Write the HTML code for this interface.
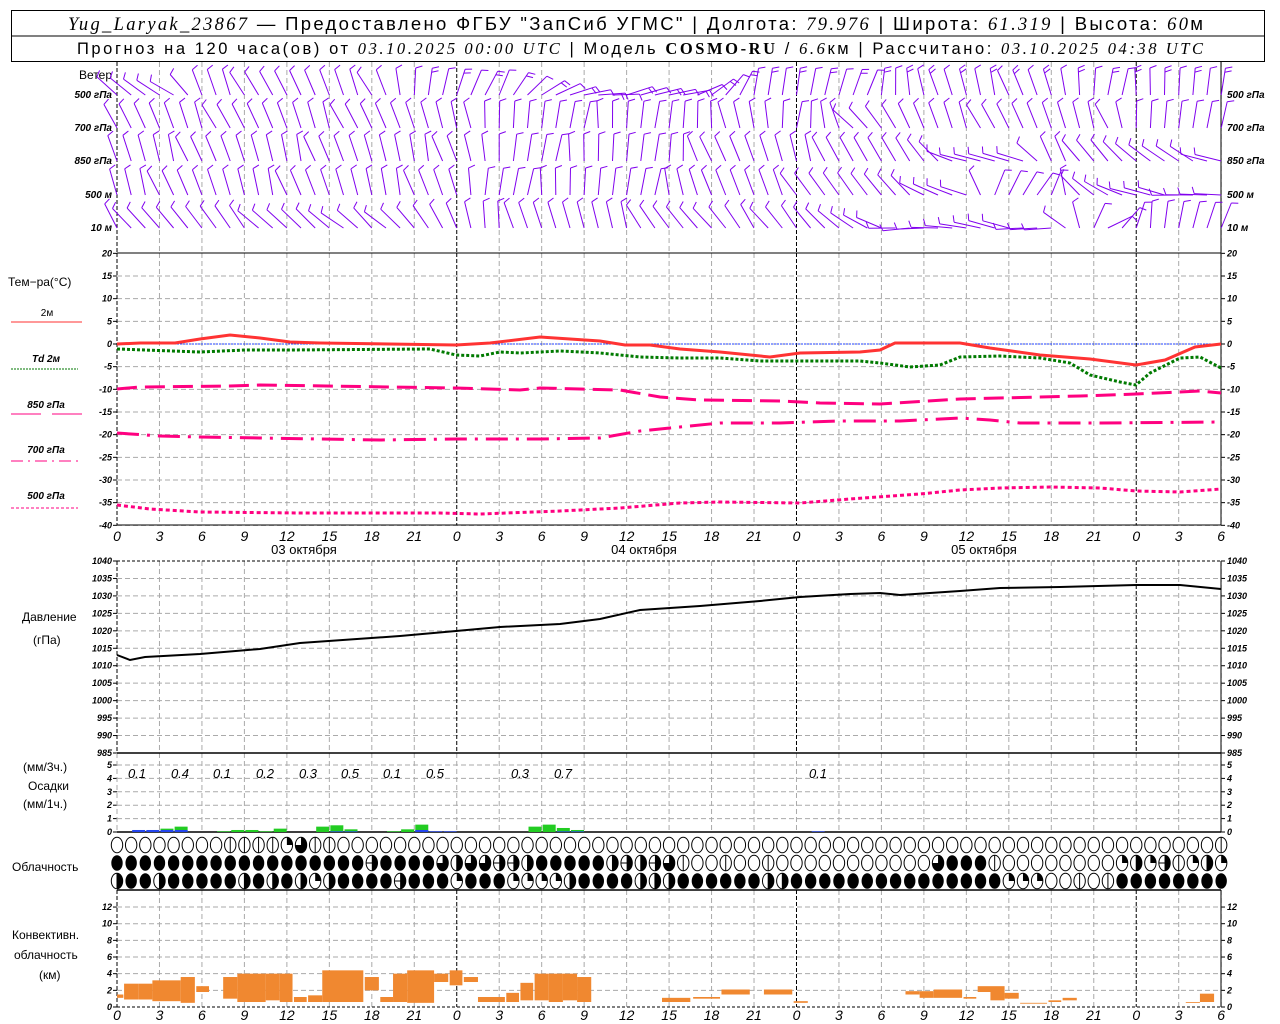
<!DOCTYPE html>
<html><head><meta charset="utf-8"><style>
html,body{margin:0;padding:0;background:#fff;width:1280px;height:1024px;overflow:hidden}
svg{display:block}
text{font-family:"Liberation Sans",sans-serif;fill:#000}
.ax{font-size:9px;font-style:italic;font-weight:bold}
.lb{font-size:12px}
</style></head><body>
<svg id="s" width="1280" height="1024" viewBox="0 0 1280 1024" xmlns="http://www.w3.org/2000/svg">
<rect x="11.5" y="10.5" width="1253" height="51" fill="none" stroke="#000"/>
<line x1="11" y1="36" x2="1265" y2="36" stroke="#000"/>
<text x="68" y="30" textLength="1135" lengthAdjust="spacing" style="font-size:18.5px"><tspan style="font-family:'Liberation Serif',serif;font-style:italic">Yug_Laryak_23867</tspan> — Предоставлено ФГБУ "ЗапСиб УГМС" | Долгота: <tspan style="font-family:'Liberation Serif',serif;font-style:italic">79.976</tspan> | Широта: <tspan style="font-family:'Liberation Serif',serif;font-style:italic">61.319</tspan> | Высота: <tspan style="font-family:'Liberation Serif',serif;font-style:italic">60</tspan>м</text>
<text x="77" y="54" textLength="1126" lengthAdjust="spacing" style="font-size:16.5px">Прогноз на 120 часа(ов) от <tspan style="font-family:'Liberation Serif',serif;font-style:italic">03.10.2025 00:00 UTC</tspan>  | Модель <tspan style="font-family:'Liberation Serif',serif;font-weight:bold">COSMO-RU</tspan> / <tspan style="font-family:'Liberation Serif',serif;font-style:italic">6.6</tspan>км | Рассчитано: <tspan style="font-family:'Liberation Serif',serif;font-style:italic">03.10.2025 04:38 UTC</tspan></text>
<g id="g"></g>
</svg>
<script>
var g=document.getElementById('g'),out='';
function X(h){return 117+h*14.156;}
function L(x1,y1,x2,y2,st){out+='<line x1="'+x1+'" y1="'+y1+'" x2="'+x2+'" y2="'+y2+'" style="'+st+'"/>';}
function T(x,y,t,cls,anc,extra){out+='<text x="'+x+'" y="'+y+'" class="'+(cls||'')+'" text-anchor="'+(anc||'start')+'" '+(extra||'')+'>'+t+'</text>';}
var GR='stroke:#aaa;stroke-width:1;stroke-dasharray:5,3',DY='stroke:#000;stroke-width:1;stroke-dasharray:4,2';
function vgrid(y1,y2,day){for(var h=0;h<=78;h+=3){var isd=(h%24==0);L(X(h),y1,X(h),y2,(isd&&day)?DY:GR);}L(1221,y1,1221,y2,'stroke:#000');}
vgrid(62,253,true);
for(var t=20;t>=-40;t-=5){var y=344-t*4.533;if(t<20)L(117,y,1221,y,GR);T(112,y+3,t,'ax','end');T(1227,y+3,t,'ax');L(1221,y,1225,y,'stroke:#000');L(113,y,117,y,'stroke:#000');}
vgrid(253,525,true);
L(117,253,1221,253,'stroke:#000');L(117,525,1221,525,'stroke:#000');
L(117,344,1221,344,'stroke:#2040ff;stroke-width:1;stroke-dasharray:2,1');
for(var p=1040;p>=985;p-=5){var y=561+(1040-p)*3.4909;if(p<1040&&p>985)L(117,y,1221,y,GR);if(p>985){T(112,y+3,p,'ax','end');T(1227,y+3,p,'ax');}L(1221,y,1225,y,'stroke:#000');L(113,y,117,y,'stroke:#000');}
vgrid(561,753,true);
L(117,561,1221,561,'stroke:#000;stroke-dasharray:3,2');
for(var v=0;v<=5;v++){var y=832-v*13.4;if(v>0)L(117,y,1221,y,GR);T(112,y+3,v,'ax','end');T(1227,y+3,v,'ax');L(1221,y,1225,y,'stroke:#000');L(113,y,117,y,'stroke:#000');}
T(112,756,'985','ax','end');T(1227,756,'985','ax');
vgrid(753,832,false);
L(117,753,1221,753,'stroke:#000;stroke-width:1.5');L(117,832,1221,832,'stroke:#000;stroke-width:1.5');
for(var k=0;k<=12;k+=2){var y=1007-k*8.33;if(k>0)L(117,y,1221,y,GR);T(112,y+3,k,'ax','end');T(1227,y+3,k,'ax');L(1221,y,1225,y,'stroke:#000');L(113,y,117,y,'stroke:#000');}
vgrid(890,1007,true);
L(117,890,1221,890,'stroke:#000;stroke-width:1.5');L(117,1007,1221,1007,'stroke:#000;stroke-dasharray:3,2');
for(var h=0;h<=78;h+=3){var lab=h%24;T(X(h),541,lab,'ax','middle','style="font-size:14px;font-weight:normal"');T(X(h),1020,lab,'ax','middle','style="font-size:14px;font-weight:normal"');}
T(304,554,'03 октября','lb','middle','style="font-size:13px"');T(644,554,'04 октября','lb','middle','style="font-size:13px"');T(984,554,'05 октября','lb','middle','style="font-size:13px"');
T(112,79,'Ветер','lb','end');
var wl=[['500 гПа',95],['700 гПа',128],['850 гПа',161],['500 м',195],['10   м',228]];
wl.forEach(function(a){T(112,a[1]+3,a[0],'ax','end','style="font-size:10px"');T(1227,a[1]+3,a[0],'ax','start','style="font-size:10px"');});
T(8,286,'Тем−ра(°C)','lb');
T(47,316,'2м','ax','middle','style="font-size:10px;font-weight:normal;font-style:normal"');L(11,322,82,322,'stroke:#ff3030;stroke-width:1');
T(46,362,'Td   2м','ax','middle','style="font-size:10px"');L(11,369,78,369,'stroke:#007700;stroke-dasharray:2,1');
T(46,408,'850 гПа','ax','middle','style="font-size:10px"');L(11,414,41,414,'stroke:#ff0080');L(52,414,82,414,'stroke:#ff0080');
T(46,453,'700 гПа','ax','middle','style="font-size:10px"');L(11,461,78,461,'stroke:#ff0080;stroke-dasharray:12,5,2,5');
T(46,499,'500 гПа','ax','middle','style="font-size:10px"');L(11,508,78,508,'stroke:#ff0080;stroke-dasharray:3,2');
T(22,621,'Давление','lb');T(33,644,'(гПа)','lb');
T(23,771,'(мм/3ч.)','lb');T(28,790,'Осадки','lb');T(23,808,'(мм/1ч.)','lb');
T(12,871,'Облачность','lb');
T(12,939,'Конвективн.','lb');T(14,959,'облачность','lb');T(39,979,'(км)','lb');
function curve(pts,st){var d='';pts.forEach(function(p,i){d+=(i?'L':'M')+p[0]+','+p[1];});out+='<path d="'+d+'" fill="none" style="'+st+'"/>';}
curve([[117,344],[140,343],[175,343],[200,339],[230,335],[260,338],[290,342],[320,343],[456,345],[490,343],[540,337],[570,339],[600,341],[625,345],[650,345],[680,349],[720,352],[770,357],[800,353],[860,352],[880,350],[895,343],[960,343],[990,348],[1040,355],[1090,359],[1136,365],[1165,360],[1195,347],[1221,344]],'stroke:#ff3333;stroke-width:3');
curve([[117,349],[200,352],[245,350],[290,350],[430,349],[456,355],[480,356],[500,352],[520,353],[560,351],[600,353],[640,357],[680,358],[720,358],[760,361],[860,361],[880,363],[910,367],[940,365],[960,357],[1000,356],[1040,358],[1070,363],[1090,375],[1120,382],[1136,385],[1150,373],[1180,358],[1200,357],[1221,368]],'stroke:#007a00;stroke-width:3;stroke-dasharray:3,2');
curve([[117,389],[140,387],[230,386],[260,385],[456,388],[520,390],[540,388],[620,390],[660,397],[700,400],[780,401],[820,403],[880,404],[960,399],[1040,397],[1080,396],[1136,394],[1200,391],[1221,393]],'stroke:#ff0080;stroke-width:3;stroke-dasharray:20,8');
curve([[117,433],[160,436],[200,437],[260,438],[380,440],[456,439],[540,439],[600,438],[640,431],[680,427],[720,423],[780,423],[840,421],[900,421],[960,418],[990,420],[1020,423],[1100,423],[1221,422]],'stroke:#ff0080;stroke-width:3;stroke-dasharray:22,8,3,8');
curve([[117,505],[150,509],[200,512],[300,513],[440,513],[480,514],[560,511],[620,508],[680,503],[720,502],[800,503],[850,499],[920,494],[960,490],[1000,488],[1050,487],[1100,488],[1136,491],[1180,492],[1221,489]],'stroke:#ff0080;stroke-width:3;stroke-dasharray:4,3');
curve([[117,655],[130,660],[145,657],[200,654],[260,649],[300,643],[400,636],[456,631],[500,627],[560,624],[600,619],[640,610],[700,606],[760,601],[800,597],[850,594],[880,593],[900,595],[960,591],[1000,588],[1060,587],[1136,585],[1180,585],[1221,589]],'stroke:#000;stroke-width:2');
var pr=[[1,0,.15],[2,0,.15],[3,.25,.15],[4,.4,.15],[7,.05,0],[8,.15,0],[9,.15,0],[10,.05,0],[11,.25,0],[14,.4,0],[15,.5,.05],[16,.2,.05],[19,.05,0],[20,.2,0],[21,.55,.15],[22,0,.05],[23,0,.05],[29,.4,0],[30,.55,0],[31,.3,.05],[32,.15,.05],[49,0,.05]];
pr.forEach(function(b){var x=X(b[0])+1,w=13;if(b[1]>0)out+='<rect x="'+x+'" y="'+(832-b[1]*13.4)+'" width="'+w+'" height="'+(b[1]*13.4)+'" fill="#22cc22"/>';if(b[2]>0)out+='<rect x="'+x+'" y="'+(832-b[2]*13.4)+'" width="'+w+'" height="'+(b[2]*13.4)+'" fill="#2244ee"/>';});
var pn=[[137,'0.1'],[180,'0.4'],[222,'0.1'],[265,'0.2'],[308,'0.3'],[350,'0.5'],[392,'0.1'],[435,'0.5'],[520,'0.3'],[563,'0.7'],[818,'0.1']];
pn.forEach(function(a){T(a[0],778,a[1],'','middle','style="font-size:13px;font-style:italic"');});
var cv=[[0,.45,1.1,1.5],[.5,1.5,.9,2.8],[1.5,2.5,.9,2.8],[2.5,4.5,.7,3.2],[4.5,5.5,.5,3.6],[5.6,6.5,1.8,2.5],[7.5,8.5,1,3.6],[8.5,10.5,.6,4],[10.5,11.5,.8,4],[11.5,12.4,.6,4],[12.5,13.4,.6,1.2],[13.5,14.5,.6,1.4],[14.5,17.4,.6,4.4],[17.5,18.5,2,3.6],[18.6,19.5,.6,1.2],[19.5,20.5,.6,4],[20.5,22.4,.5,4.4],[22.4,23.4,3,4],[23.5,24.4,2.6,4.4],[24.5,25.5,3,3.6],[25.5,27.4,.6,1.2],[27.5,28.4,.6,1.7],[28.5,29.4,.8,2.9],[29.5,30.5,.8,4],[30.5,31.5,.6,4],[31.5,32.5,.8,4],[32.5,33.5,.6,3.6],[38.5,40.5,.6,1.1],[40.7,42.6,1,1.2],[42.7,44.7,1.5,2.1],[45.7,47.7,1.5,2.1],[47.8,48.8,.5,.7],[55.7,56.7,1.5,1.9],[56.7,57.7,1.1,1.9],[57.7,59.7,1.1,2.1],[59.8,60.7,1,1.2],[60.8,62.7,1.8,2.5],[61.7,62.7,.8,1.8],[62.7,63.7,1,1.7],[63.8,65.7,.4,.5],[65.8,66.7,.6,.8],[66.8,67.8,.8,1.1],[75.5,76.5,.5,.6],[76.5,77.5,.6,1.6]];
cv.forEach(function(c){var x1=X(c[0]),x2=X(c[1]),y1=1007-c[3]*8.33,y2=1007-c[2]*8.33;out+='<rect x="'+x1+'" y="'+y1+'" width="'+(x2-x1)+'" height="'+(y2-y1)+'" fill="#f08830"/>';});
var rows=["oooooooovvvvqQvv"+"o".repeat(62)+"v",
"fffffffffffffffffftffffQhQQtthfffffht"+"htQvoovoov"+"ooooooooooo"+"Qfffv"+"oooooooo"+"qhqtvqhq",
"hffhfffffhfhfhqhfffftfffqfffqqqqhffff"+"hhhffffffhh"+"fffffffffffffff"+"qqqoovovffffffff"];
var ry=[845,863,881],rx=5.7,rr=7.8;
rows.forEach(function(s,ri){for(var i=0;i<79;i++){var c=s[i]||'o',cx=X(i),cy=ry[ri];
var e='<ellipse cx="'+cx+'" cy="'+cy+'" rx="'+rx+'" ry="'+rr+'" ';
if(c=='f'){out+=e+'fill="#000"/>';continue;}
out+=e+'fill="#fff" stroke="#000" stroke-width="1"/>';
if(c=='h'||c=='t')out+='<path d="M'+cx+','+(cy-rr)+' A'+rx+','+rr+' 0 0 1 '+cx+','+(cy+rr)+' Z"/>';
if(c=='q')out+='<path d="M'+cx+','+cy+' L'+cx+','+(cy-rr)+' A'+rx+','+rr+' 0 0 1 '+(cx+rx)+','+cy+' Z"/>';
if(c=='Q')out+='<path d="M'+cx+','+cy+' L'+cx+','+(cy-rr)+' A'+rx+','+rr+' 0 1 1 '+(cx-rx)+','+cy+' Z"/>';
if(c=='v'||c=='h')L(cx,cy-rr,cx,cy+rr,'stroke:#000');
if(c=='t')L(cx-rx,cy,cx+rx,cy,'stroke:#000');
}});
var W=[[95,[[0,-40],[4,-60],[6,-25],[18,-25],[21,5],[26,20],[30,60],[34,80],[40,80],[44,20],[48,10],[54,15],[58,-20],[66,-15],[70,5],[78,5]]],
[128,[[0,-25],[24,-20],[26,5],[34,5],[38,10],[42,-10],[46,-5],[48,10],[52,-40],[56,-25],[70,-20],[72,5],[78,5]]],
[161,[[0,-20],[24,-15],[28,5],[38,5],[42,-20],[50,-20],[56,-35],[60,-70],[64,-75],[66,-30],[70,-35],[72,-50],[74,-60],[78,-70]]],
[195,[[0,-20],[24,-15],[26,5],[38,5],[42,-20],[52,-35],[58,-60],[60,-70],[62,20],[66,30],[68,-40],[70,-60],[72,-80],[78,-85]]],
[228,[[0,-35],[14,-45],[16,-60],[20,-40],[24,-25],[26,-10],[36,-20],[42,-45],[48,-30],[52,-60],[56,-90],[62,-80],[66,-90],[70,60],[72,10],[78,20]]]];
function interp(k,h){for(var i=1;i<k.length;i++){if(h<=k[i][0]){var a=k[i-1],b=k[i],f=(h-a[0])/(b[0]-a[0]);return a[1]+(b[1]-a[1])*f;}}return k[k.length-1][1];}
var PU='stroke:#8000ee;stroke-width:1';
W.forEach(function(r,ri){for(var h=0;h<=78;h++){var ang=interp(r[1],h)+((h*37+ri*11)%9-4)*2,a=ang*Math.PI/180,len=27;
var bx=X(h),by=r[0],tx=bx+Math.sin(a)*len,ty=by-Math.cos(a)*len;L(bx.toFixed(1),by,tx.toFixed(1),ty.toFixed(1),PU);
var fa=(ang+70)*Math.PI/180,fl=7;L(tx.toFixed(1),ty.toFixed(1),(tx+Math.sin(fa)*fl).toFixed(1),(ty-Math.cos(fa)*fl).toFixed(1),PU);
var two=(ri==0&&h>=22&&h%2==0);
if(two){var sx=tx-Math.sin(a)*4,sy=ty+Math.cos(a)*4;L(sx.toFixed(1),sy.toFixed(1),(sx+Math.sin(fa)*fl).toFixed(1),(sy-Math.cos(fa)*fl).toFixed(1),PU);}
}});
g.innerHTML=out;
</script>
</body></html>
